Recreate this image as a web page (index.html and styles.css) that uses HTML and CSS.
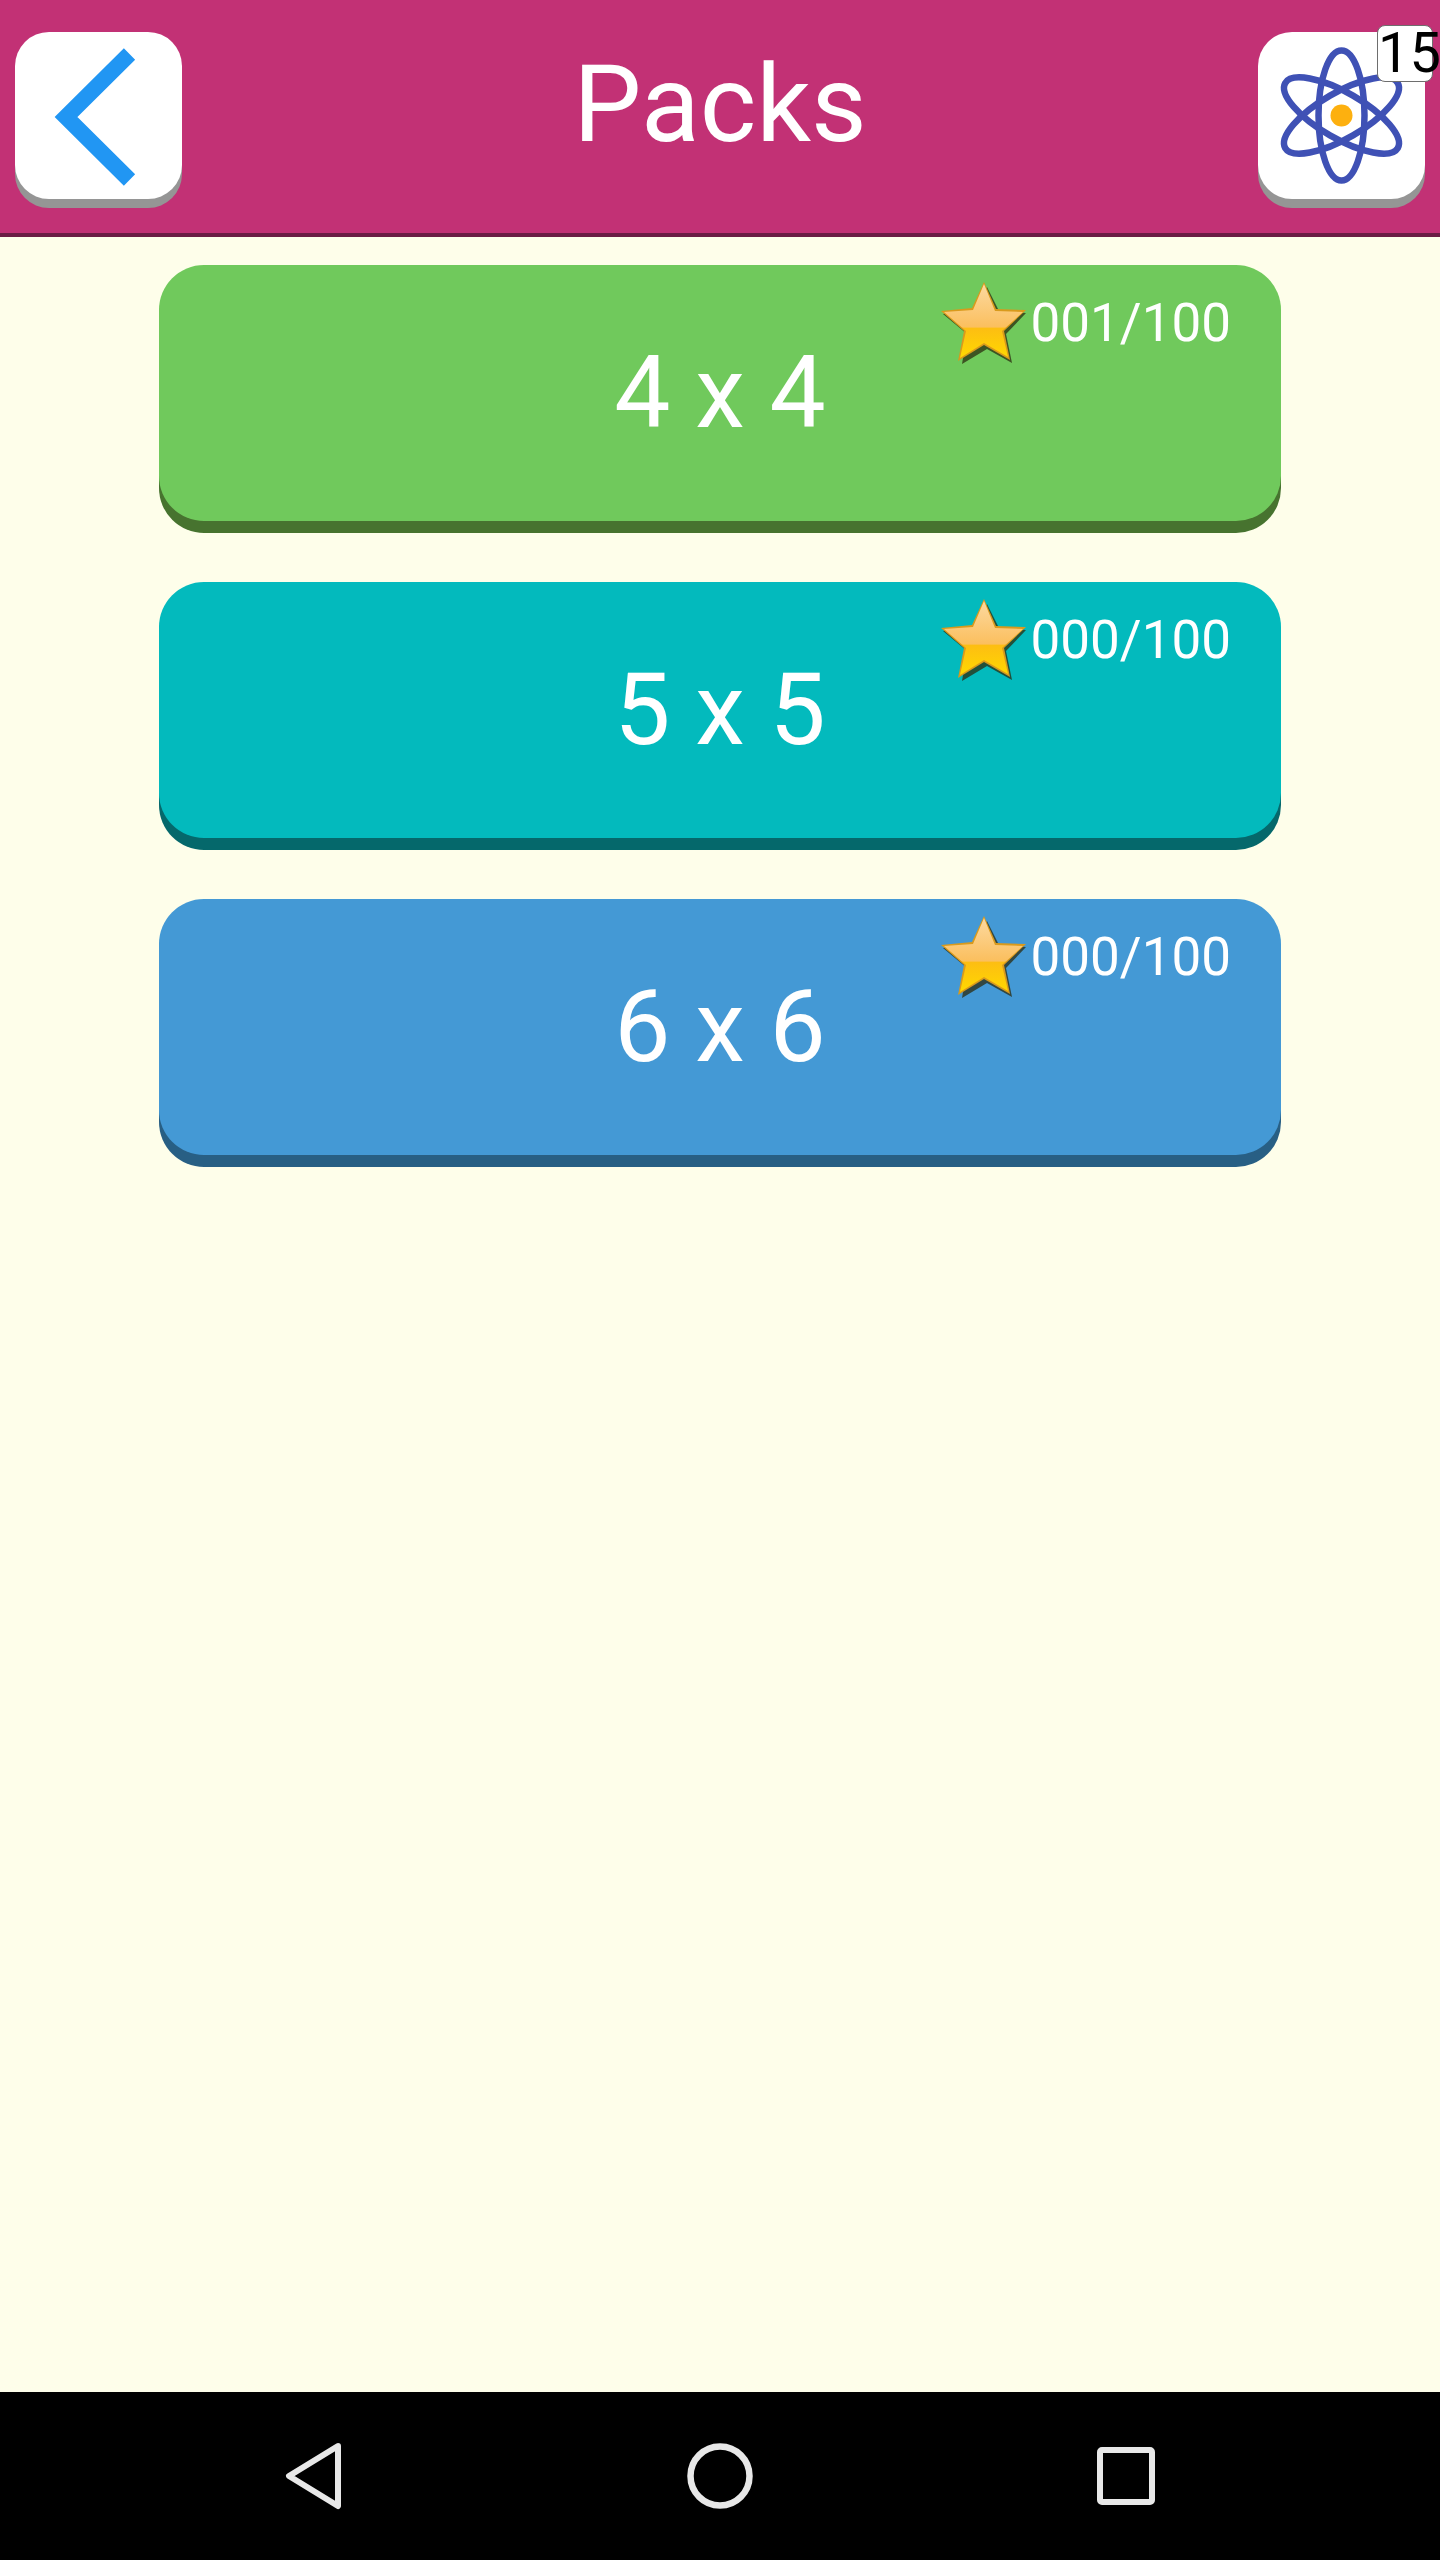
FILE: index.html
```html
<!DOCTYPE html>
<html lang="en">
<head>
    <meta charset="UTF-8">
    <meta name="viewport" content="width=device-width, initial-scale=1.0">
    <title>Packs</title>
    <link rel="stylesheet" href="styles.css">
</head>
<body>
    <svg class="defs" width="0" height="0">
        <defs>
            <linearGradient id="starFill" x1="0" y1="0" x2="0" y2="1">
                <stop offset="0" stop-color="#fcd9a0"/>
                <stop offset="0.58" stop-color="#fbbf5e"/>
                <stop offset="0.6" stop-color="#fdbe12"/>
                <stop offset="1" stop-color="#ffd800"/>
            </linearGradient>
            <symbol id="star" viewBox="0 0 88 84">
                <path d="M47 6 L59 30 L86 32 L66 53 L72 82 L47 68 L22 83 L27 53 L3 33 L34 29 Z" fill="#2c2c10" opacity="0.75"/>
                <path d="M44 1 L56 28 L86 29 L64 50 L70 79 L44 64 L18 80 L24 50 L1 30 L32 27 Z" fill="#d99a1c"/>
                <path d="M44 3 L55 30 L83 31 L62 50 L68 76 L44 62 L20 77 L26 50 L4 31 L33 29 Z" fill="url(#starFill)"/>
            </symbol>
        </defs>
    </svg>

    <div class="app">
        <header class="topbar">
            <a class="icon-btn" href="#">
                <svg width="167" height="167" viewBox="15 32 167 167">
                    <polyline points="129.500,54 66,117 129.500,180" fill="none" stroke="#2196f3" stroke-width="16"/>
                </svg>
            </a>
            <h1>Packs</h1>
            <a class="icon-btn" href="#">
                <svg width="167" height="167" viewBox="-83.500 -83.500 167 167">
                    <g fill="none" stroke="#3f51b5" stroke-width="6.500">
                        <ellipse rx="23" ry="65"/>
                        <ellipse rx="23" ry="65" transform="rotate(60)"/>
                        <ellipse rx="23" ry="65" transform="rotate(-60)"/>
                    </g>
                    <circle r="11" fill="#fdb00f"/>
                </svg>
                <span class="badge">15</span>
            </a>
        </header>

        <main class="packs">
            <a class="pack pack-green" href="#">
                <span class="pack-title">4 x 4</span>
                <span class="score">
                    <svg width="88" height="84"><use href="#star"/></svg>
                    001/100
                </span>
            </a>
            <a class="pack pack-teal" href="#">
                <span class="pack-title">5 x 5</span>
                <span class="score">
                    <svg width="88" height="84"><use href="#star"/></svg>
                    000/100
                </span>
            </a>
            <a class="pack pack-blue" href="#">
                <span class="pack-title">6 x 6</span>
                <span class="score">
                    <svg width="88" height="84"><use href="#star"/></svg>
                    000/100
                </span>
            </a>
        </main>

        <nav class="navbar">
            <svg width="58" height="68" viewBox="0 0 58 68">
                <path d="M53 4 L4 34 L53 64 Z" fill="none" stroke="#e8e8e8" stroke-width="6" stroke-linejoin="round" transform="translate(0 0)"/>
            </svg>
            <svg width="66" height="66" viewBox="0 0 66 66">
                <circle cx="33" cy="33" r="29.500" fill="none" stroke="#e8e8e8" stroke-width="6.500"/>
            </svg>
            <svg width="58" height="58" viewBox="0 0 58 58">
                <rect x="3" y="3" width="52" height="52" rx="2" fill="none" stroke="#e8e8e8" stroke-width="6"/>
            </svg>
        </nav>
    </div>
</body>
</html>
```

FILE: styles.css
```css
/* Basic reset for body */
body {
    font-family: Roboto, "Liberation Sans", sans-serif;
    background-color: #fefeea;
    margin: 0;
    padding: 0;
}

a {
    color: inherit;
    text-decoration: none;
}

.defs {
    display: block;
    height: 0;
}

.app {
    display: flex;
    flex-direction: column;
    height: 2560px;
}

/* Top bar */
.topbar {
    display: flex;
    justify-content: space-between;
    align-items: flex-start;
    height: 233px;
    padding: 32px 15px 0;
    box-sizing: content-box;
    background-color: #c23175;
    border-bottom: 4px solid #6b1c44;
    box-sizing: border-box;
    height: 237px;
}

.topbar h1 {
    margin: 0;
    margin-top: -14px;
    font-size: 108px;
    font-weight: 400;
    line-height: 172px;
    color: #ffffff;
}

.icon-btn {
    position: relative;
    display: block;
    width: 167px;
    height: 167px;
    background-color: #ffffff;
    border-radius: 34px;
    box-shadow: 0 9px 0 #959595;
}

.icon-btn svg {
    display: block;
}

.badge {
    position: absolute;
    top: -7px;
    right: -8px;
    width: 54px;
    height: 55px;
    background-color: #ffffff;
    border: 1px solid #6e6e6e;
    border-radius: 8px;
    font-size: 56px;
    line-height: 55px;
    text-align: center;
    color: #000000;
}

/* Pack buttons */
.packs {
    flex: 1;
    display: flex;
    flex-direction: column;
    align-items: center;
    gap: 49px;
    padding-top: 28px;
}

.pack {
    display: grid;
    width: 1122px;
    height: 256px;
    margin-bottom: 12px;
    border-radius: 45px;
    color: #ffffff;
}

.pack-title,
.score {
    grid-row: 1;
    grid-column: 1;
}

.pack-title {
    align-self: center;
    text-align: center;
    font-size: 100px;
    line-height: 1;
}

.score {
    display: flex;
    align-items: flex-start;
    justify-self: end;
    gap: 2px;
    padding: 16px 50px 0 0;
    font-size: 53px;
    line-height: 84px;
}

.pack-green {
    background-color: #70c95c;
    box-shadow: 0 12px 0 #47732f;
}

.pack-teal {
    background-color: #03babd;
    box-shadow: 0 12px 0 #05686b;
}

.pack-blue {
    background-color: #4499d5;
    box-shadow: 0 12px 0 #285f84;
}

/* Android nav bar */
.navbar {
    display: flex;
    justify-content: center;
    align-items: center;
    gap: 344px;
    height: 168px;
    background-color: #000000;
}
```
